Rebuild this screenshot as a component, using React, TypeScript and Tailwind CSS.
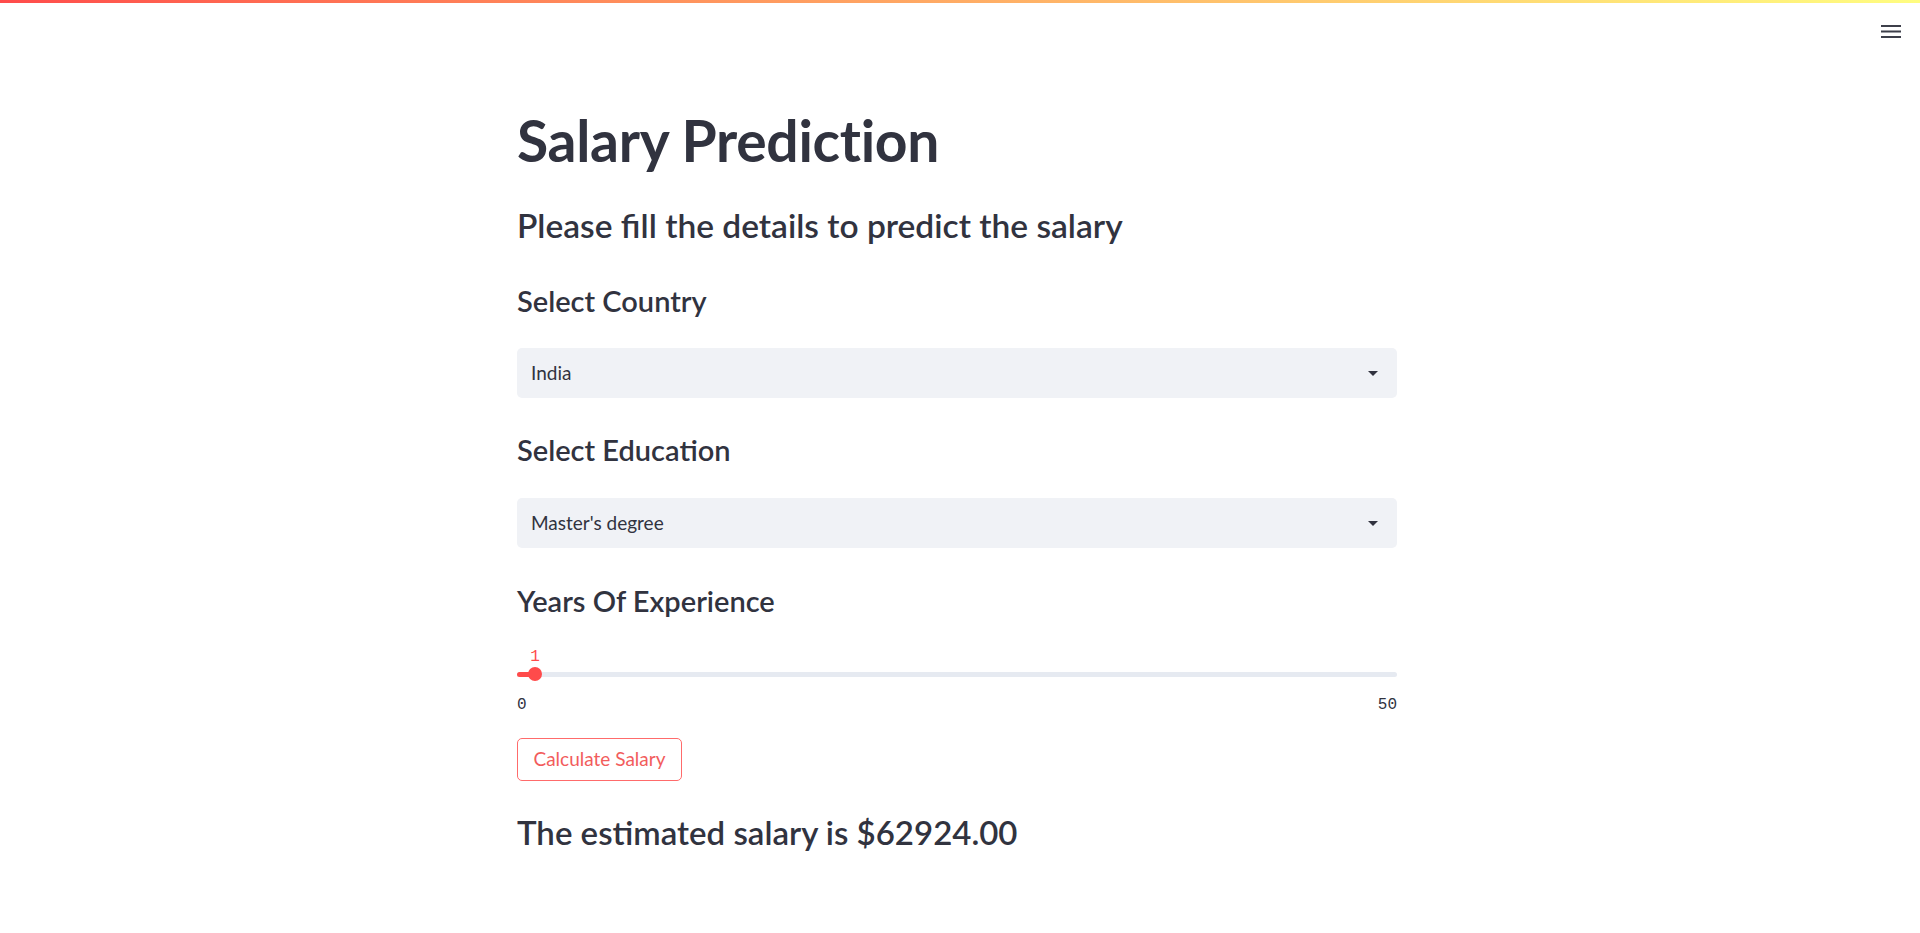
import { useState } from "react"

function Caret() {
  return (
    <svg width="10" height="5" viewBox="0 0 10 5" className="shrink-0">
      <path d="M0 0 L10 0 L5 5 Z" fill="#31333F" />
    </svg>
  )
}

function SelectBox({ value }: { value: string }) {
  return (
    <div className="flex h-[50px] w-full items-center justify-between rounded-[5px] bg-[#F0F2F6] pl-[14px] pr-[19px]">
      <span className="text-[19px] leading-[1.2] text-[#31333F]">{value}</span>
      <Caret />
    </div>
  )
}

export default function App() {
  const [years] = useState(1)
  const max = 50
  const pos = 18 + ((years - 1) / max) * 862

  return (
    <div className="relative min-h-screen bg-white font-[Lato,sans-serif] text-[#31333F]">
      {/* decoration bar */}
      <div className="h-[3px] w-full bg-gradient-to-r from-[#FF4B4B] to-[#FFFD80]" />

      {/* toolbar menu */}
      <button className="absolute right-[19px] top-[25px] p-0">
        <svg width="20" height="14" viewBox="0 0 20 14">
          <rect x="0" y="0" width="20" height="2" fill="#3d3f4a" />
          <rect x="0" y="5.5" width="20" height="2" fill="#3d3f4a" />
          <rect x="0" y="11" width="20" height="2" fill="#3d3f4a" />
        </svg>
      </button>

      <div className="mx-auto w-[886px] pt-[103px]">
        <div className="flex w-[880px] flex-col">
          <h1 className="text-[57px] font-bold leading-[1.2] tracking-[-0.3px]">Salary Prediction</h1>

          <h3 className="mt-[31px] text-[33.5px] font-semibold leading-[1.2]">
            Please fill the details to predict the salary
          </h3>

          <h4 className="mt-[38px] text-[29px] font-semibold leading-[1.2]">Select Country</h4>
          <div className="mt-[30px]">
            <SelectBox value="India" />
          </div>

          <h4 className="mt-[35px] text-[29px] font-semibold leading-[1.2]">Select Education</h4>
          <div className="mt-[30px]">
            <SelectBox value="Master's degree" />
          </div>

          <h4 className="mt-[36px] text-[29px] font-semibold leading-[1.2]">Years Of Experience</h4>

          {/* slider */}
          <div className="mt-[28px] flex flex-col font-['Liberation_Mono',monospace] text-[16px]">
            <div className="relative h-[20px]">
              <span
                className="absolute top-0 -translate-x-1/2 leading-[20px] text-[#FF4B4B]"
                style={{ left: `${pos}px` }}
              >
                {years}
              </span>
            </div>
            <div className="relative flex h-[15px] items-center">
              <div className="h-[5px] w-full rounded-full bg-[#E6EAF1]" />
              <div
                className="absolute left-0 h-[5px] rounded-l-full bg-[#FF4B4B]"
                style={{ width: `${pos}px` }}
              />
              <div
                className="absolute h-[14px] w-[14px] -translate-x-1/2 rounded-full bg-[#FF4B4B]"
                style={{ left: `${pos}px` }}
              />
            </div>
            <div className="mt-[13px] flex justify-between leading-[20px] text-[#31333F]">
              <span>0</span>
              <span>50</span>
            </div>
          </div>

          <div className="mt-[23px]">
            <button className="h-[43px] w-[165px] rounded-[5px] border border-[#FF6B6B] bg-white text-[19px] leading-[1.2] text-[#F25C5C]">
              Calculate Salary
            </button>
          </div>

          <h3 className="mt-[32px] text-[33px] font-semibold leading-[1.2]">
            The estimated salary is $62924.00
          </h3>
        </div>
      </div>
    </div>
  )
}
